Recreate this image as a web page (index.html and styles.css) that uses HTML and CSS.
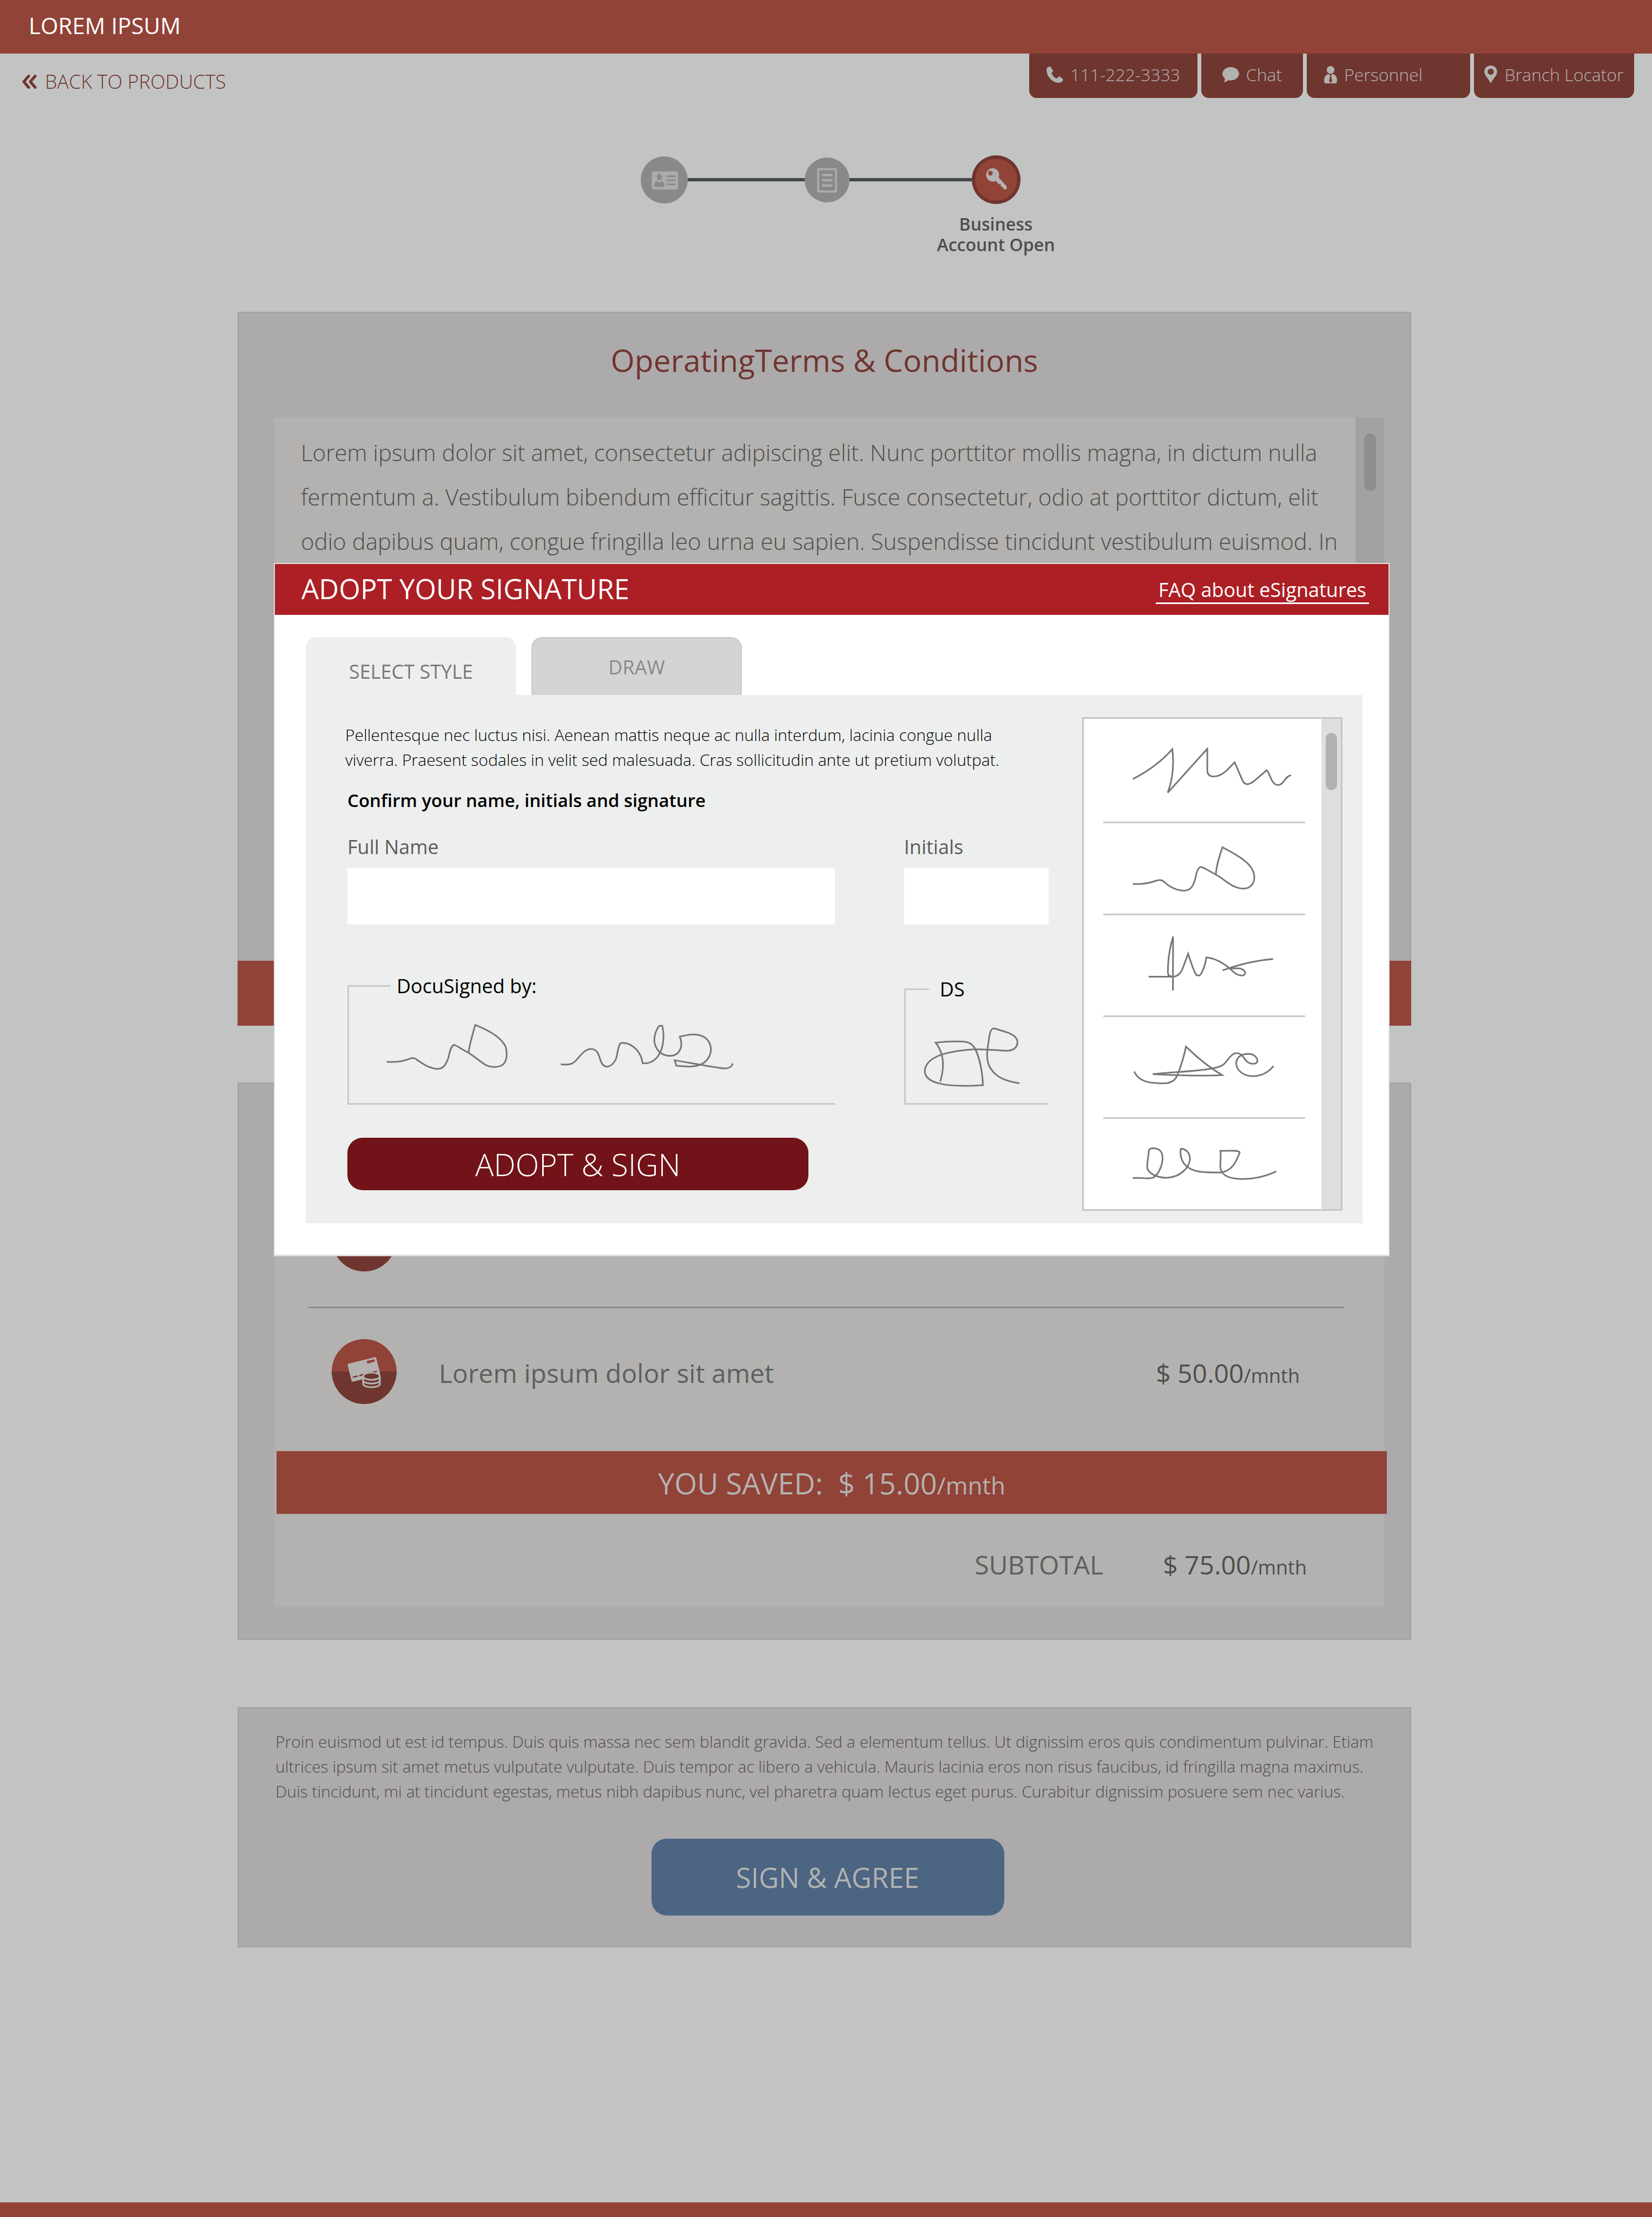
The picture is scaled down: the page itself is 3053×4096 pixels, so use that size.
FILE: index.html
```html
<!DOCTYPE html>
<html lang="en">
<head>
<meta charset="utf-8">
<meta name="viewport" content="width=device-width, initial-scale=1">
<title>Adopt your signature</title>
<link rel="stylesheet" href="styles.css">
</head>
<body>
<header class="topbar">LOREM IPSUM</header>

<div class="subbar">
  <a class="back" href="#">
    <svg class="back-icon" viewBox="0 0 28 26" aria-hidden="true"><path d="M13 2.5 4 13l9 10.5M25 2.5 16 13l9 10.5"/></svg>
    BACK TO PRODUCTS
  </a>
  <nav class="contact">
    <a class="contact-link phone" href="#">
      <svg viewBox="0 0 43 42" width="31" height="30" aria-hidden="true"><path d="M8 0C3 1 0 3 0 8C0 20 6 30 16 37C22 41 28 42 32 42C37 41 41 39 42.500 35C43 33 42 32 41 31L35 26.500C33 25.500 31 26 30 27C28 30 27 31 25 30.500C19 28 15 22 13 17C13 15 14 14.500 16 13.500C17 12 16.500 10 16 9L11.500 2C10.500 0 9 0 8 0Z"/></svg>
      111-222-3333
    </a>
    <a class="contact-link chat" href="#">
      <svg viewBox="0 0 44 40" width="31" height="28" aria-hidden="true"><path d="M22 0C34 0 44 8 44 17.500S34 35 22 35C20 35 18 34.800 16 34.300C13 37 9 39 4 39.500C6 36 7 33 6.500 30C2.500 26.500 0 22 0 17.500C0 8 10 0 22 0Z"/></svg>
      Chat
    </a>
    <a class="contact-link personnel" href="#">
      <svg viewBox="0 0 34 45" width="24" height="32" aria-hidden="true"><circle cx="17" cy="10" r="10"/><path d="M9 21C3 24 0 30 0 38C0 42 1 45 4 45H30C33 45 34 42 34 38C34 30 31 24 25 21L20 21 17 24 14 21Z"/><path class="tie" d="M14 21h6l-2 4 3 14-4 5-4-5 3-14z"/></svg>
      Personnel
    </a>
    <a class="contact-link branch" href="#">
      <svg viewBox="0 0 33 46" width="24" height="33" aria-hidden="true"><path fill-rule="evenodd" d="M16.500 0C26 0 33 7 33 16C33 25 23 33 16.500 46C10 33 0 25 0 16C0 7 7 0 16.500 0ZM16.500 8A8 8 0 1 0 16.500 24A8 8 0 1 0 16.500 8Z"/></svg>
      Branch Locator
    </a>
  </nav>
</div>

<main class="page">
  <div class="stepper">
    <svg class="step-id" viewBox="54 53 121 121" role="img" aria-label="Identity">
      <circle cx="114.500" cy="113.500" r="60.500" fill="#8b8889"/>
      <rect x="82.500" y="91.500" width="67.500" height="46.500" rx="5" fill="#adaaab"/>
      <g fill="#8b8889"><ellipse cx="102" cy="106" rx="6.500" ry="8"/><path d="M90 131.500C88 122 92 117 97 116.500L102 121.500 107 116.500C112 117 116 122 114.500 131.500Z"/><rect x="121" y="102" width="23" height="4" rx="1"/><rect x="121" y="112.500" width="23" height="4" rx="1"/><rect x="121" y="123" width="23" height="4" rx="1"/></g>
    </svg>
    <span class="step-line"></span>
    <svg class="step-form" viewBox="477 55 117 117" role="img" aria-label="Application">
      <circle cx="535.500" cy="113.500" r="58.500" fill="#8b8889"/>
      <rect x="512.300" y="85.600" width="46.500" height="58" fill="none" stroke="#adaaab" stroke-width="5.300" stroke-linejoin="round"/>
      <g fill="#adaaab"><rect x="522" y="97.500" width="28" height="6" rx="2"/><rect x="522" y="111" width="28" height="6" rx="2"/><rect x="522" y="125" width="28" height="6" rx="2"/></g>
    </svg>
    <span class="step-line"></span>
    <svg class="step-key" viewBox="910 51 126 126" role="img" aria-label="Account open">
      <circle cx="973" cy="114" r="63" fill="#6f352f"/>
      <circle cx="973" cy="114" r="54.500" fill="#914338"/>
      <path fill="#b3b2b0" fill-rule="evenodd" d="M963.500 84.200A17.500 17.500 0 0 1 979.500 108.500L1000 130.700V138.700H992L990 133.300 985 131V126H979.500L972.500 117.300A17.500 17.500 0 1 1 963.500 84.200ZM958 91A6 6 0 1 0 958 103A6 6 0 1 0 958 91Z"/>
    </svg>
    <p class="step-label">Business<br>Account Open</p>
  </div>

  <section class="card terms-card">
    <h1>OperatingTerms &amp; Conditions</h1>
    <div class="terms">
      <p>Lorem ipsum dolor sit amet, consectetur adipiscing elit. Nunc porttitor mollis magna, in dictum nulla<br>fermentum a. Vestibulum bibendum efficitur sagittis. Fusce consectetur, odio at porttitor dictum, elit<br>odio dapibus quam, congue fringilla leo urna eu sapien. Suspendisse tincidunt vestibulum euismod. In</p>
      <div class="track"><span class="thumb"></span></div>
    </div>
  </section>
  <div class="terms-bar"></div>

  <section class="card summary-card">
    <div class="summary">
      <ul class="items">
        <li class="item"><span class="disc"></span></li>
        <li class="item">
          <span class="disc">
            <svg viewBox="19 24 502 502" aria-hidden="true">
              <g transform="rotate(-14 268 255)">
                <path fill="#b3b2b0" d="M166 187H368C376 187 381 192 381 200V318C381 325 376 330 368 330H166C158 330 153 325 153 318V200C153 192 158 187 166 187Z"/>
                <path fill="#914338" d="M304 201h60v20h-60zM325 291h37v11h-37z"/>
                <path fill="#6f352f" d="M170 291h38v11h-38zM222 291h37v11h-37zM274 291h37v11h-37z"/>
              </g>
              <path fill="#b3b2b0" d="M255 313C255 270 398 270 398 313V370C398 413 255 413 255 370Z"/>
              <g fill="#6f352f"><ellipse cx="327" cy="311" rx="57" ry="21"/><path d="M270 331C290 350 364 350 384 331V345C370 366 284 366 270 345ZM270 361C290 379 364 379 384 361V373C370 394 284 394 270 373Z"/></g>
            </svg>
          </span>
          <span class="item-name">Lorem ipsum dolor sit amet</span>
          <span class="price">$ 50.00<small>/mnth</small></span>
        </li>
      </ul>
      <p class="saved">YOU SAVED:&nbsp; $ 15.00<small>/mnth</small></p>
      <p class="subtotal"><span>SUBTOTAL</span><span class="price">$ 75.00<small>/mnth</small></span></p>
    </div>
  </section>

  <section class="card agree-card">
    <p>Proin euismod ut est id tempus. Duis quis massa nec sem blandit gravida. Sed a elementum tellus. Ut dignissim eros quis condimentum pulvinar. Etiam<br>ultrices ipsum sit amet metus vulputate vulputate. Duis tempor ac libero a vehicula. Mauris lacinia eros non risus faucibus, id fringilla magna maximus.<br>Duis tincidunt, mi at tincidunt egestas, metus nibh dapibus nunc, vel pharetra quam lectus eget purus. Curabitur dignissim posuere sem nec varius.</p>
    <button class="agree" type="button">SIGN &amp; AGREE</button>
  </section>
</main>

<footer class="footer"></footer>

<div class="modal" role="dialog" aria-labelledby="modal-title">
  <div class="modal-head">
    <h2 id="modal-title">ADOPT YOUR SIGNATURE</h2>
    <a href="#">FAQ about eSignatures</a>
  </div>
  <div class="modal-body">
    <div class="tabs" role="tablist">
      <button class="tab active" type="button" role="tab" aria-selected="true">SELECT STYLE</button>
      <button class="tab" type="button" role="tab" aria-selected="false">DRAW</button>
    </div>
    <div class="panel" role="tabpanel">
      <form class="form">
        <p class="intro">Pellentesque nec luctus nisi. Aenean mattis neque ac nulla interdum, lacinia congue nulla<br>viverra. Praesent sodales in velit sed malesuada. Cras sollicitudin ante ut pretium volutpat.</p>
        <h3>Confirm your name, initials and signature</h3>
        <div class="pair">
          <div class="field"><label for="full-name">Full Name</label><input id="full-name" type="text"></div>
          <div class="field"><label for="initials">Initials</label><input id="initials" type="text"></div>
        </div>
        <div class="pair previews">
          <div class="preview">
            <div class="preview-title wide">DocuSigned by:</div>
            <svg class="ink" viewBox="164 340 943 444" preserveAspectRatio="none" aria-hidden="true">
              <path d="M237 598C262 602 275 590 283 583C293 576 295 590 303 600C315 620 328 630 337 630C350 628 353 600 357 580C360 545 363 522 369 522C373 524 385 545 396 557C410 578 420 600 430 613C440 624 455 625 463 610C470 595 472 565 468 530C462 500 445 465 409 432C405 465 398 520 396 556"/>
              <path d="M575 609C595 615 600 605 608 583C618 555 625 539 635 540C645 542 648 560 652 590C655 612 660 620 666 620C675 615 680 600 683 580C686 545 688 515 692 513C705 510 715 525 723 545C732 570 733 590 734 604C750 608 762 585 767 560C774 530 777 480 772 436L766 436C758 460 756 490 757 510C760 545 770 572 788 571C808 570 813 520 806 485C825 472 840 470 852 485C865 500 870 540 864 570C857 605 845 615 830 619C815 620 805 616 799 615C799 605 797 598 796 591C830 604 870 622 893 628C903 628 909 615 908 605"/>
            </svg>
          </div>
          <div class="preview short">
            <div class="preview-title">DS</div>
            <svg class="ink" viewBox="1237 340 278 444" preserveAspectRatio="none" aria-hidden="true">
              <path d="M1304 687C1310 640 1315 570 1295 512C1315 507 1335 505 1350 507C1365 510 1370 530 1374 550C1383 600 1386 650 1387 703C1365 708 1325 708 1305 697C1280 685 1273 660 1274 635C1277 580 1310 550 1370 542C1405 539 1420 550 1436 548C1450 545 1455 525 1454 505C1452 475 1435 465 1408 447C1400 450 1400 480 1397 520C1393 570 1395 610 1404 635C1415 670 1432 685 1458 695"/>
            </svg>
          </div>
        </div>
        <button class="adopt" type="button">ADOPT &amp; SIGN</button>
      </form>

      <div class="picker">
        <ul class="styles">
          <li><button type="button" aria-label="Signature style 1"><svg class="ink" viewBox="196 30 1021 312" preserveAspectRatio="none"><path d="M345 213C420 190 490 160 545 122C553 160 552 205 522 254L722 121V185C722 200 735 205 755 205C795 205 825 185 860 162L898 214C905 226 915 230 930 228C955 224 970 212 1023 186C1040 195 1045 231 1080 231C1110 231 1115 203 1146 201"/></svg></button></li>
          <li><button type="button" aria-label="Signature style 2"><svg class="ink" viewBox="196 347 1021 275" preserveAspectRatio="none"><path d="M345 532C375 532 400 533 440 526C465 522 470 519 485 520C505 521 510 531 530 538C560 549 585 552 605 552C645 552 655 530 663 510C670 490 678 480 690 480C700 480 705 484 765 503C800 515 820 527 850 537C890 549 920 547 935 541C965 530 965 505 950 488C925 460 860 440 799 420C785 443 770 470 765 502"/></svg></button></li>
          <li><button type="button" aria-label="Signature style 3"><svg class="ink" viewBox="196 627 1021 305" preserveAspectRatio="none"><path d="M425 814H545C520 812 522 805 523 790C524 750 535 720 549 692L548 856M545 814C570 815 585 805 595 793L625 744C635 765 645 780 656 797C668 815 685 815 695 800C710 783 715 765 717 755C760 758 800 770 837 790C860 803 875 812 905 810C920 806 915 792 885 789C865 788 850 789 837 789M1055 760C960 765 880 777 799 795"/></svg></button></li>
          <li><button type="button" aria-label="Signature style 4"><svg class="ink" viewBox="196 937 1021 305" preserveAspectRatio="none"><path d="M352 1103C365 1120 390 1132 430 1136C470 1139 500 1140 520 1138C550 1134 560 1128 570 1115C590 1085 605 1055 614 1027C670 1060 730 1090 797 1114C700 1117 600 1116 446 1111C560 1104 690 1102 760 1092C800 1087 810 1080 825 1067C845 1050 860 1046 872 1047C900 1048 905 1062 920 1071C935 1081 965 1082 974 1074C980 1065 965 1050 930 1049C890 1049 865 1062 869 1082C875 1102 905 1117 955 1117C1005 1116 1035 1103 1057 1086"/></svg></button></li>
          <li><button type="button" aria-label="Signature style 5"><svg class="ink" viewBox="196 1247 1021 276" preserveAspectRatio="none"><path d="M345 1428C385 1425 420 1433 450 1426C480 1415 495 1385 496 1368C496 1345 475 1337 450 1337C438 1337 430 1338 427 1342C425 1360 418 1375 418 1395C420 1412 465 1428 520 1427C580 1425 630 1400 634 1370C636 1350 610 1338 588 1339C583 1355 590 1375 610 1388C640 1408 690 1412 790 1411C850 1407 870 1375 886 1350C884 1343 850 1344 788 1345C793 1360 786 1380 788 1395C792 1420 830 1431 905 1431C965 1431 1020 1422 1071 1408"/></svg></button></li>
        </ul>
        <div class="track"><span class="thumb"></span></div>
      </div>
    </div>
  </div>
</div>
</body>
</html>
```

FILE: styles.css
```css
:root {
  --brick: #914338;
  --brick-dark: #6f352f;
  --stone: #b3b2b0;
  --rule: #cac9c8;
}

* { box-sizing: border-box; }

body {
  position: relative;
  display: flex;
  flex-direction: column;
  min-height: 100vh;
  margin: 0;
  background: #c2c4c3;
  color: #4e4e4e;
  font-family: "Open Sans", "Noto Sans", sans-serif;
}

h1, h2, h3, p, ul { margin: 0; padding: 0; font-weight: 400; }
ul { list-style: none; }
a { color: inherit; text-decoration: none; }
button { padding: 0; border: 0; background: none; font-family: inherit; cursor: pointer; }
svg { display: block; }

.topbar {
  padding: 0 0 5px 53px;
  background: var(--brick);
  color: #fff;
  font-size: 42px;
  line-height: 94px;
}

/* Back link and contact tabs */
.subbar { display: flex; justify-content: space-between; align-items: flex-start; padding: 0 33px 0 40px; }
.back {
  display: flex;
  align-items: center;
  gap: 15px;
  margin-top: 28px;
  color: var(--brick-dark);
  font-size: 36px;
  font-weight: 300;
  line-height: 48px;
}
.back-icon { width: 28px; height: 26px; fill: none; stroke: currentColor; stroke-width: 5; stroke-linecap: round; stroke-linejoin: round; }
.contact { display: flex; gap: 7px; }
.contact-link {
  display: flex;
  align-items: center;
  justify-content: center;
  gap: 13px;
  height: 82px;
  padding-bottom: 5px;
  border-radius: 0 0 14px 14px;
  background: var(--brick-dark);
  color: var(--stone);
  font-size: 32px;
  font-weight: 300;
  white-space: nowrap;
}
.contact-link svg { fill: currentColor; }
.contact-link .tie { fill: var(--brick-dark); }
.phone { width: 311px; }
.chat { width: 188px; }
.personnel { width: 302px; justify-content: flex-start; padding-left: 32px; }
.branch { width: 296px; }

.page { padding: 106px 445px 105px 439px; }

/* Progress */
.stepper {
  display: grid;
  grid-template-columns: 87px 216px 83px 226px 90px;
  align-items: center;
  justify-content: center;
  padding-left: 22px;
}
.step-id, .step-form, .step-key { width: 100%; }
.step-line { height: 6px; background: #434647; }
.step-label {
  grid-column: 5;
  justify-self: center;
  margin-top: 18px;
  font-size: 32px;
  font-weight: 600;
  line-height: 38px;
  text-align: center;
  white-space: nowrap;
}

/* Cards */
.card { border: 3px solid #a6a3a4; background: #adaaab; }
.terms-card { margin-top: 105px; padding: 46px 0 63px; border-bottom: 0; }
h1 { color: var(--brick-dark); font-size: 57px; line-height: 80px; text-align: center; }
.terms {
  display: flex;
  justify-content: space-between;
  height: 940px;
  margin: 67px 47px 0 65px;
  background: var(--stone);
}
.terms p { padding: 23px 0 0 49px; font-size: 42px; font-weight: 300; line-height: 82px; white-space: nowrap; }
.terms .track { width: 53px; padding-top: 29px; background: #a3a2a0; }
.terms .thumb { width: 22px; height: 106px; background: #8e8e8d; }
.thumb { display: block; margin: 0 auto; border-radius: 11px; }
.terms-bar { height: 120px; background: var(--brick); }

.summary-card { margin-top: 105px; padding: 40px 47px 58px 65px; }
.summary { padding-top: 129px; background: var(--stone); }
.items { padding: 0 74px 0 63px; }
.item { display: flex; align-items: center; padding: 57px 82px 65px 43px; border-bottom: 3px solid #8d8c8a; }
.item:last-child { border-bottom: 0; }
.disc {
  width: 120px;
  height: 120px;
  border-radius: 50%;
  background: linear-gradient(var(--brick) 50%, var(--brick-dark) 50%);
}
.item-name { margin-left: 78px; padding-top: 4px; color: #5c605f; font-size: 48px; }
.price { font-size: 48px; }
.item .price { margin-left: auto; padding-top: 4px; }
.price small { font-size: 36px; }
.saved {
  height: 116px;
  margin: 22px -5px 0 4px;
  background: var(--brick);
  color: var(--stone);
  font-size: 54px;
  line-height: 118px;
  text-align: center;
}
.saved small { font-size: 44px; }
.subtotal {
  display: flex;
  justify-content: flex-end;
  gap: 110px;
  height: 172px;
  padding: 16px 143px 0 0;
  color: #5c605f;
  font-size: 48px;
  line-height: 156px;
}
.subtotal .price { color: #4e4e4e; }

.agree-card { margin-top: 124px; padding: 38px 55px 56px 67px; }
.agree-card p { font-size: 30px; font-weight: 300; line-height: 46px; white-space: nowrap; }
.agree {
  display: block;
  width: 652px;
  height: 142px;
  margin: 64px auto 0;
  border-radius: 28px;
  background: #4b6583;
  color: var(--stone);
  font-size: 51px;
}

.footer { height: 27px; margin-top: auto; background: var(--brick); }

/* Signature dialog */
.modal {
  position: absolute;
  top: 1040px;
  left: 506px;
  right: 485px;
  border: 2px solid #dfe1e0;
  border-bottom-width: 3px;
  background: #fff;
}
.modal-head {
  display: flex;
  align-items: center;
  justify-content: space-between;
  height: 94px;
  padding: 0 36px 0 49px;
  background: #ac1f25;
  color: #fff;
}
h2 { padding-bottom: 5px; font-size: 51px; line-height: 70px; }
.modal-head a { padding: 5px 5px 0; border-bottom: 3px solid #fff; font-size: 36px; line-height: 46px; }
.modal-body { padding: 41px 48px 58px 57px; }
.tabs { display: flex; gap: 28px; }
.tab {
  width: 389px;
  height: 107px;
  border: 3px solid #cccccc;
  border-bottom: 0;
  border-radius: 20px 20px 0 0;
  background: #d4d4d4;
  color: #8a8a8a;
  font-size: 36px;
}
.tab.active { padding-top: 19px; border: 0; background: #edefee; color: #777; }
.panel {
  display: grid;
  grid-template-columns: 1fr 481px;
  gap: 62px;
  padding: 41px 37px 23px 73px;
  background: #edefee;
}
.form { padding-top: 10px; }
.intro { color: #000; font-size: 30px; font-weight: 300; line-height: 46px; white-space: nowrap; }
h3 { margin: 29px 0 0 4px; color: #000; font-size: 33px; font-weight: 600; line-height: 46px; }
.pair {
  display: grid;
  grid-template-columns: 900fr 267fr;
  align-items: end;
  gap: 128px;
  margin: 38px 0 0 4px;
}
.field label { display: block; color: #5c5c5c; font-size: 36px; line-height: 50px; }
.field input { display: block; width: 100%; height: 104px; margin-top: 14px; padding: 0 20px; border: 0; background: #fff; font: inherit; font-size: 36px; }
.previews { margin-top: 112px; }
.preview { display: flex; flex-direction: column; height: 221px; border: 3px solid var(--rule); border-width: 0 0 3px 3px; }
.preview.short { height: 215px; }
.preview-title { display: flex; align-items: center; gap: 20px; height: 3px; color: #000; font-size: 36px; }
.preview-title::before { content: ""; width: 43px; height: 3px; background: var(--rule); }
.preview-title.wide { gap: 11px; }
.preview-title.wide::before { width: 77px; }
.preview .ink { height: 182px; margin-top: auto; }
.ink { display: block; width: 100%; height: 100%; fill: none; stroke: #767676; stroke-width: 3px; }
.ink path { vector-effect: non-scaling-stroke; }
.adopt {
  display: block;
  width: 852px;
  height: 97px;
  margin: 61px 0 0 4px;
  border-radius: 28px;
  background: #711318;
  color: #fff;
  font-size: 57px;
  font-weight: 300;
}

.picker { display: flex; justify-content: space-between; height: 912px; border: 3px solid #c4c6c4; background: #fff; }
.styles {
  display: grid;
  grid-template-rows: 190px 170px 188px 188px 170px;
  width: 409px;
  padding-left: 36px;
}
.styles li + li { border-top: 3px solid var(--rule); }
.styles button { display: block; width: 100%; height: 100%; }
.picker .track { width: 36px; padding-top: 26px; background: #dedede; }
.picker .thumb { width: 21px; height: 106px; background: #b1b1af; }
```
